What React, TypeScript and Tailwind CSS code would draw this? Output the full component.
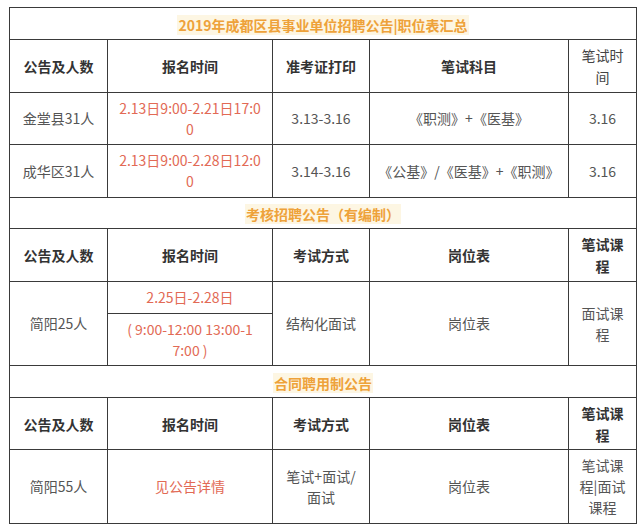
import type { ReactNode } from "react";

const font = { fontFamily: '"Microsoft YaHei", "Noto Sans CJK SC", "Noto Sans", sans-serif' };

function Title({ children, h }: { children: ReactNode; h: string }) {
  return (
    <tr className={h}>
      <td colSpan={5} className="border border-[#3a3a3a] text-center align-middle p-0">
        <span className="bg-[#fdf6e3] text-[#eea23a] font-bold text-[14px] leading-[20px] px-[1px]">
          {children}
        </span>
      </td>
    </tr>
  );
}

function Th({ children, light }: { children: ReactNode; light?: boolean }) {
  return (
    <td
      className={
        "border border-[#3a3a3a] text-center align-middle text-[14px] leading-[22px] p-0 " +
        (light ? "font-normal text-[#444]" : "font-bold text-[#333]")
      }
    >
      {children}
    </td>
  );
}

function Td({
  children,
  red,
  rowSpan,
}: {
  children: ReactNode;
  red?: boolean;
  rowSpan?: number;
}) {
  return (
    <td
      rowSpan={rowSpan}
      className={
        "border border-[#3a3a3a] text-center align-middle text-[14px] leading-[21px] p-0 " +
        (red ? "text-[#e26a55]" : "text-[#555]")
      }
    >
      {children}
    </td>
  );
}

export default function App() {
  return (
    <div className="w-[640px] h-[528px] bg-white pl-[9px] pt-[7px] overflow-hidden" style={font}>
      <table className="w-[627px] table-fixed border-collapse">
        <colgroup>
          <col className="w-[98px]" />
          <col className="w-[165px]" />
          <col className="w-[97px]" />
          <col className="w-[199px]" />
          <col className="w-[68px]" />
        </colgroup>
        <tbody>
          <Title h="h-[32px]">2019年成都区县事业单位招聘公告|职位表汇总</Title>
          <tr className="h-[53px]">
            <Th>公告及人数</Th>
            <Th>报名时间</Th>
            <Th>准考证打印</Th>
            <Th>笔试科目</Th>
            <Th light>
              笔试时
              <br />间
            </Th>
          </tr>
          <tr className="h-[52px]">
            <Td>金堂县31人</Td>
            <Td red>
              2.13日9:00-2.21日17:0
              <br />0
            </Td>
            <Td>3.13-3.16</Td>
            <Td>《职测》+《医基》</Td>
            <Td>3.16</Td>
          </tr>
          <tr className="h-[53px]">
            <Td>成华区31人</Td>
            <Td red>
              2.13日9:00-2.28日12:0
              <br />0
            </Td>
            <Td>3.14-3.16</Td>
            <Td>《公基》/《医基》+《职测》</Td>
            <Td>3.16</Td>
          </tr>

          <Title h="h-[31px]">考核招聘公告（有编制）</Title>
          <tr className="h-[53px]">
            <Th>公告及人数</Th>
            <Th>报名时间</Th>
            <Th>考试方式</Th>
            <Th>岗位表</Th>
            <Th>
              笔试课
              <br />程
            </Th>
          </tr>
          <tr className="h-[32px]">
            <Td rowSpan={2}>简阳25人</Td>
            <Td red>2.25日-2.28日</Td>
            <Td rowSpan={2}>结构化面试</Td>
            <Td rowSpan={2}>岗位表</Td>
            <Td rowSpan={2}>
              面试课
              <br />程
            </Td>
          </tr>
          <tr className="h-[52px]">
            <Td red>
              ( 9:00-12:00 13:00-1
              <br />7:00 )
            </Td>
          </tr>

          <Title h="h-[32px]">合同聘用制公告</Title>
          <tr className="h-[52px]">
            <Th>公告及人数</Th>
            <Th>报名时间</Th>
            <Th>考试方式</Th>
            <Th>岗位表</Th>
            <Th>
              笔试课
              <br />程
            </Th>
          </tr>
          <tr className="h-[74px]">
            <Td>简阳55人</Td>
            <Td red>见公告详情</Td>
            <Td>
              笔试+面试/
              <br />面试
            </Td>
            <Td>岗位表</Td>
            <Td>
              笔试课
              <br />程|面试
              <br />课程
            </Td>
          </tr>
        </tbody>
      </table>
    </div>
  );
}
